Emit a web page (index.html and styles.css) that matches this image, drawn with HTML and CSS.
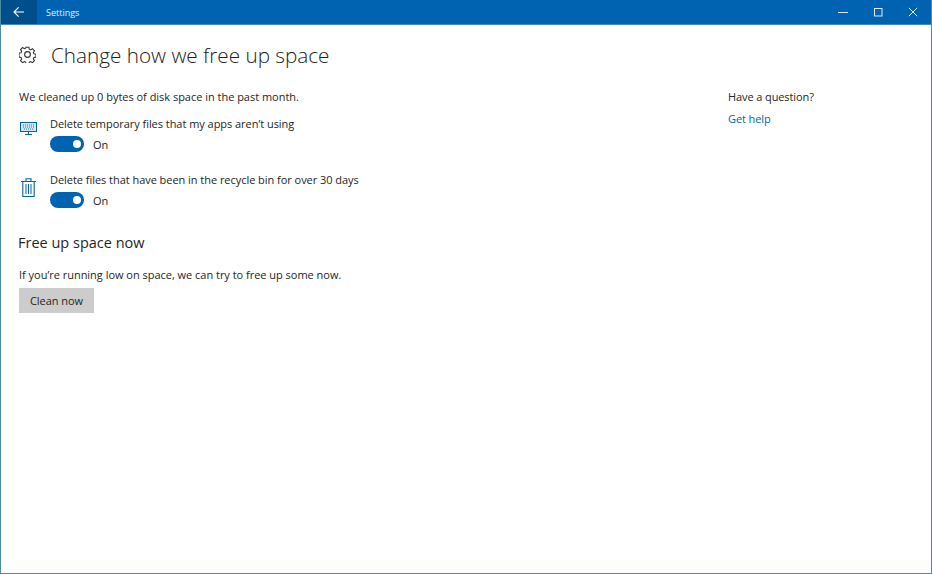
FILE: index.html
```html
<!DOCTYPE html>
<html lang="en">
<head>
<meta charset="utf-8">
<title>Settings</title>
<link rel="stylesheet" href="styles.css">
</head>
<body>
<div class="window">
  <header class="titlebar">
    <div class="back">
      <svg width="12" height="12" viewBox="0 0 12 12" fill="none" stroke="#fff" stroke-width="1.1"><path d="M11 6H1.2M5.600 1.400 1 6l4.600 4.600"/></svg>
    </div>
    <div class="apptitle">Settings</div>
    <div class="controls">
      <div class="ctl"><svg width="10" height="10" viewBox="0 0 10 10" stroke="#dbe9f5" fill="none"><path d="M0 5.500h10"/></svg></div>
      <div class="ctl"><svg width="10" height="10" viewBox="0 0 10 10" stroke="#dbe9f5" fill="none"><rect x="1.500" y="1.500" width="7.500" height="7.500"/></svg></div>
      <div class="ctl"><svg width="10" height="10" viewBox="0 0 10 10" stroke="#dbe9f5" fill="none"><path d="M.8.8l8.400 8.400M9.200.8.800 9.200"/></svg></div>
    </div>
  </header>
  <div class="body">
    <main class="main">
      <div class="heading">
        <svg class="gear" width="17" height="17" viewBox="0 0 16 16" fill="none" stroke="#333" stroke-width="1.050"><path d="M6.600.8h2.800l.4 2 1.300.6 1.800-1.100 2 2-1.100 1.800.6 1.300 2 .4v2.800l-2 .4-.6 1.300 1.100 1.800-2 2-1.800-1.100-1.300.6-.4 2H6.600l-.4-2-1.300-.6-1.800 1.100-2-2 1.100-1.800-.6-1.300-2-.4V6.600l2-.4.6-1.300L1.100 3.100l2-2 1.800 1.100 1.300-.6z" transform="translate(.4 .4) scale(.95)"/><circle cx="8" cy="8" r="2.700"/></svg>
        <h1>Change how we free up space</h1>
      </div>
      <p class="stat">We cleaned up 0 bytes of disk space in the past month.</p>
      <div class="option first">
        <svg class="opt-icon monitor" width="17" height="13" viewBox="0 0 17 13" fill="none" stroke="#0063b1"><rect x=".5" y=".5" width="16" height="9" fill="#d4e6f4"/><path d="M8.500 9.500V12M5 12.500h7"/><path d="M3 3h11M3 5h11M4 7h9" stroke="#2a7bbd" stroke-dasharray="1 1"/></svg>
        <div class="opt-text">
          <div class="label">Delete temporary files that my apps aren’t using</div>
          <div class="toggle-row"><span class="toggle"><span class="knob"></span></span><span class="state">On</span></div>
        </div>
      </div>
      <div class="option second">
        <svg class="opt-icon trash" width="15" height="19" viewBox="0 0 15 19" fill="none" stroke="#0063b1"><path d="M0 3.500h15M5 3.500V.8h5v2.700M1.800 3.500v15h11.400v-15" stroke-width="1.100"/><path d="M5 6v10M7.500 6v10M10 6v10"/></svg>
        <div class="opt-text">
          <div class="label">Delete files that have been in the recycle bin for over 30 days</div>
          <div class="toggle-row"><span class="toggle"><span class="knob"></span></span><span class="state">On</span></div>
        </div>
      </div>
      <h2>Free up space now</h2>
      <p class="low">If you’re running low on space, we can try to free up some now.</p>
      <button class="clean" type="button">Clean now</button>
    </main>
    <aside class="side">
      <div class="question">Have a question?</div>
      <a class="help" href="#">Get help</a>
    </aside>
  </div>
</div>
</body>
</html>
```
FILE: styles.css
```css
* { box-sizing: border-box; }
html, body { margin: 0; height: 100%; }
body { font-family: "Open Sans", "Noto Sans", sans-serif; color: #262626; background: #fff; }
.window { width: 932px; height: 574px; border: 1px solid #4c8da6; border-top: 0; display: flex; flex-direction: column; overflow: hidden; }
.titlebar { height: 25px; margin: 0 -1px; flex: none; display: flex; align-items: center; background: #0063b1; border-bottom: 1px solid #3f8cc4; color: #e6f0f8; }
.back { width: 37px; height: 24px; background: #004f8c; display: flex; align-items: center; justify-content: center; }
.apptitle { margin-left: 9px; font-size: 9px; }
.controls { margin-left: auto; margin-right: 2px; display: flex; }
.ctl { width: 35px; height: 24px; display: flex; align-items: center; justify-content: center; }
.body { flex: 1; display: flex; }
.main { width: 727px; padding-left: 18px; }
.heading { display: flex; align-items: center; height: 31px; margin-top: 14px; }
.gear { flex: none; }
h1 { margin: 2px 0 0 15px; font-size: 20.700px; font-weight: 300; line-height: 31px; color: #222; }
.stat { margin: 19px 0 0; font-size: 11px; line-height: 16px; letter-spacing: -.02px; }
.option { display: flex; }
.option.first { margin-top: 11px; }
.option.second { margin-top: 20px; }
.opt-icon { flex: none; margin-top: 6px; }
.monitor { margin-left: 1px; }
.trash { margin: 6px 1px 0 2px; }
.opt-text { margin-left: 13px; }
.label { font-size: 11px; line-height: 16px; letter-spacing: -.04px; }
.toggle-row { display: flex; align-items: center; margin-top: 4px; height: 16px; }
.toggle { width: 34px; height: 16px; border-radius: 8px; background: #0063b1; display: flex; align-items: center; justify-content: flex-end; padding-right: 3px; }
.knob { width: 8px; height: 8px; border-radius: 50%; background: #fff; }
.state { margin-left: 9px; font-size: 11px; }
h2 { margin: 25px 0 0 -1px; font-size: 14.500px; font-weight: 400; line-height: 20px; }
.low { margin: 14px 0 0; font-size: 11px; line-height: 16px; letter-spacing: -.02px; }
.clean { display: block; margin: 5px 0 0; width: 75px; height: 25px; border: 0; padding: 0; background: #ccc; color: #262626; font: inherit; font-size: 11px; letter-spacing: -.05px; }
.question { margin-top: 64px; font-size: 11px; line-height: 16px; letter-spacing: -.1px; }
.help { display: block; margin-top: 6px; font-size: 11px; line-height: 16px; color: #0067b8; text-decoration: none; letter-spacing: -.1px; }
```
